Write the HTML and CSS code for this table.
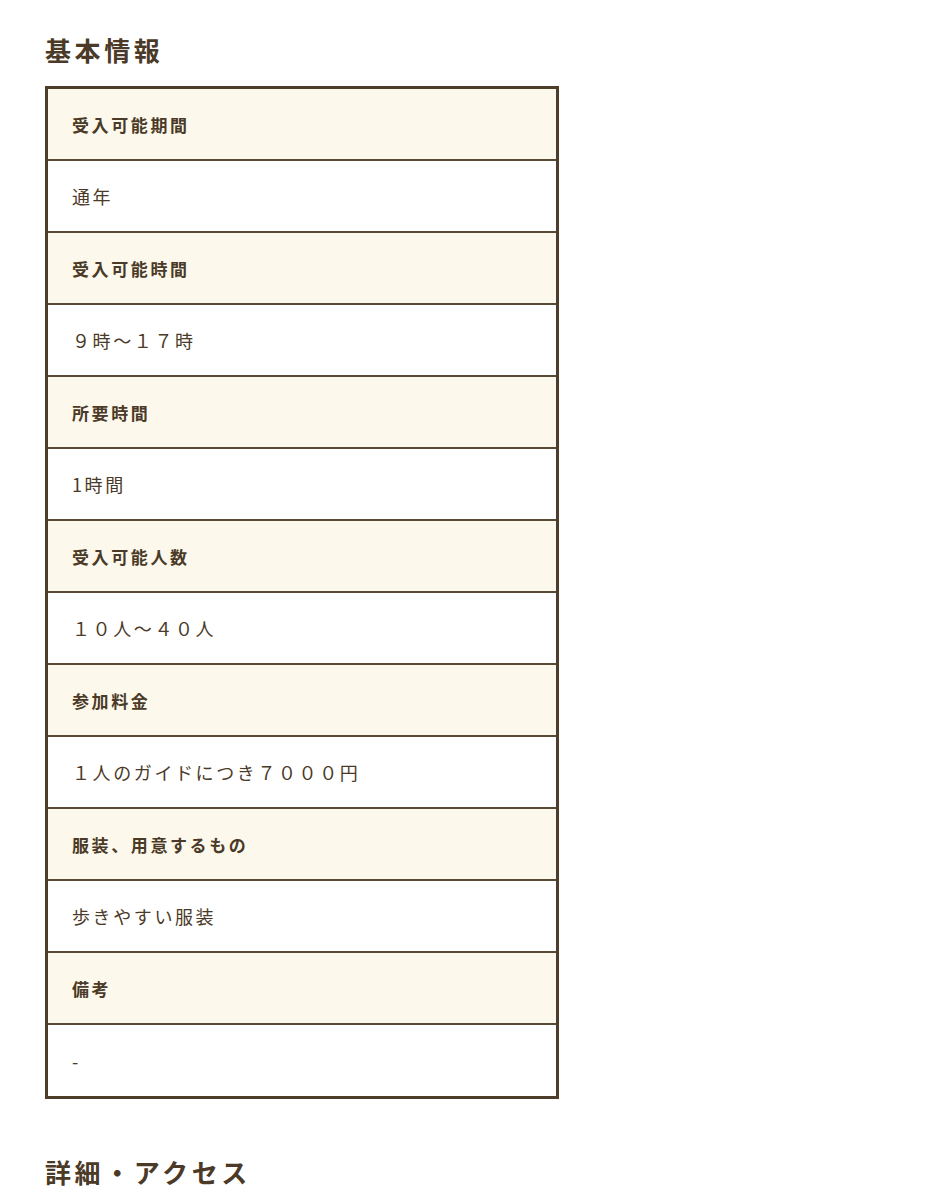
FILE: index.html
```html
<!DOCTYPE html>
<html lang="ja">
<head>
<meta charset="utf-8">
<link rel="stylesheet" href="styles.css">
</head>
<body>
<main class="page">
  <h2 class="section-title">基本情報</h2>
  <dl class="info">
    <dt>受入可能期間</dt><dd>通年</dd>
    <dt>受入可能時間</dt><dd>９時〜１７時</dd>
    <dt>所要時間</dt><dd>1時間</dd>
    <dt>受入可能人数</dt><dd>１０人〜４０人</dd>
    <dt>参加料金</dt><dd>１人のガイドにつき７０００円</dd>
    <dt>服装、用意するもの</dt><dd>歩きやすい服装</dd>
    <dt>備考</dt><dd>-</dd>
  </dl>
  <h2 class="section-title second">詳細・アクセス</h2>
</main>
</body>
</html>
```
FILE: styles.css
```css
html, body {
  margin: 0;
  padding: 0;
  background: #ffffff;
}
body {
  font-family: "Noto Sans CJK JP", "Noto Sans", sans-serif;
  color: #4a3a27;
}
.page {
  padding: 30px 0 0 45px;
  width: 514px;
}
.section-title {
  margin: 0;
  font-size: 26px;
  line-height: 40px;
  font-weight: 700;
  letter-spacing: 3.6px;
  color: #4a3a27;
}
.section-title.second {
  margin-top: 53px;
}
.info {
  margin: 16px 0 0 0;
  border: 3px solid #4e3d29;
  display: flex;
  flex-direction: column;
}
.info dt, .info dd {
  margin: 0;
  height: 70px;
  display: flex;
  align-items: center;
  padding: 0 0 0 24px;
  box-sizing: content-box;
}
.info dt {
  background: #fcf8ec;
  font-weight: 700;
  font-size: 17px;
  letter-spacing: 2.6px;
  border-bottom: 2px solid #5a4935;
}
.info dd {
  background: #ffffff;
  font-size: 18px;
  letter-spacing: 2.6px;
  border-bottom: 2px solid #5a4935;
}
.info dd:last-child {
  border-bottom: none;
  height: 71px;
}
```
